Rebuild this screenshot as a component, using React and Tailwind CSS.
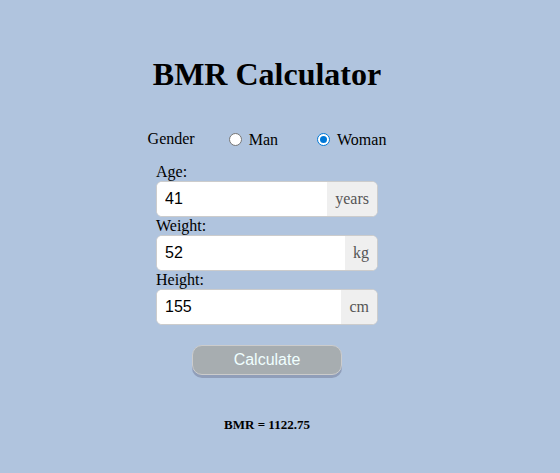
import { useState } from "react";

const serif = "font-['Liberation_Serif',serif]";

function GenderOption({ value, label, checked, onSelect }) {
  return (
    <label className="flex items-center gap-[7px]">
      <input
        type="radio"
        name="gender"
        value={value}
        checked={checked}
        onChange={() => onSelect(value)}
        className="grid size-[13px] appearance-none place-items-center rounded-full border border-[#767676] bg-white before:hidden before:size-[7px] before:rounded-full before:bg-[#0078d7] checked:border-[#0078d7] checked:before:block"
      />
      <span className="pt-0.5">{label}</span>
    </label>
  );
}

function Field({ id, label, unit, value, onChange }) {
  return (
    <div>
      <label htmlFor={id} className="block">
        {label}
      </label>
      <div className="flex h-9 overflow-hidden rounded-md border border-[#cccccc] bg-white">
        <input
          id={id}
          type="text"
          inputMode="numeric"
          value={value}
          onChange={(event) => onChange(event.target.value)}
          className="min-w-0 flex-1 bg-white px-2 font-['Liberation_Sans',sans-serif] text-base text-black outline-none"
        />
        <span className="flex items-center bg-[#efefef] px-2 text-[#555555]">{unit}</span>
      </div>
    </div>
  );
}

export default function App() {
  const [gender, setGender] = useState("woman");
  const [age, setAge] = useState("41");
  const [weight, setWeight] = useState("52");
  const [height, setHeight] = useState("155");
  const [result, setResult] = useState("1122.75");

  function calculate(event) {
    event.preventDefault();
    const base = 10 * Number(weight) + 6.25 * Number(height) - 5 * Number(age);
    setResult((gender === "man" ? base + 5 : base - 161).toFixed(2));
  }

  return (
    <main className={`${serif} min-h-screen bg-[#b0c4de] pt-14 pr-[26px] text-base leading-[18px] text-black`}>
      <h1 className="text-center text-[32px] leading-9 font-bold">BMR Calculator</h1>
      <form onSubmit={calculate} className="flex flex-col items-center">
        <div role="radiogroup" aria-labelledby="gender-label" className="mt-[37px] flex items-center">
          <span id="gender-label" className="mr-[34px]">Gender</span>
          <div className="flex gap-[39px]">
            <GenderOption value="man" label="Man" checked={gender === "man"} onSelect={setGender} />
            <GenderOption value="woman" label="Woman" checked={gender === "woman"} onSelect={setGender} />
          </div>
        </div>
        <div className="mt-3.5 w-full max-w-[222px]">
          <Field id="age" label="Age:" unit="years" value={age} onChange={setAge} />
          <Field id="weight" label="Weight:" unit="kg" value={weight} onChange={setWeight} />
          <Field id="height" label="Height:" unit="cm" value={height} onChange={setHeight} />
        </div>
        <button
          type="submit"
          className="mt-5 h-[30px] w-[150px] rounded-[10px] border border-[#cccccc] bg-[#a7adb0] font-['Liberation_Sans',sans-serif] text-base leading-7 text-[#f0ffff] shadow-[0_3px_0_#909eb9]"
        >
          Calculate
        </button>
      </form>
      <output className="mt-[41px] block text-center text-[13px] font-bold">BMR = {result}</output>
    </main>
  );
}
